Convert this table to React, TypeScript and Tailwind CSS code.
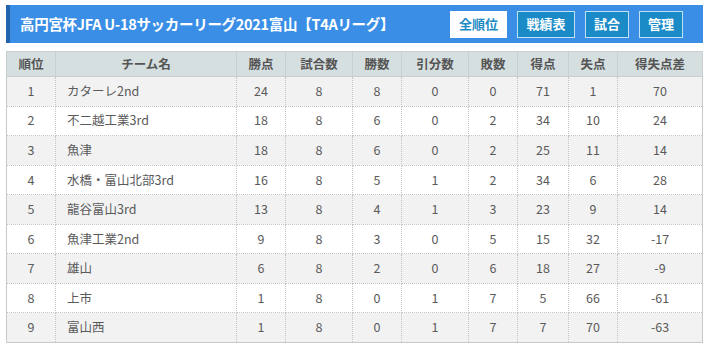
import React from "react";

type Row = {
  rank: number;
  team: string;
  pts: number;
  played: number;
  win: number;
  draw: number;
  lose: number;
  gf: number;
  ga: number;
  gd: number;
};

const rows: Row[] = [
  { rank: 1, team: "カターレ2nd", pts: 24, played: 8, win: 8, draw: 0, lose: 0, gf: 71, ga: 1, gd: 70 },
  { rank: 2, team: "不二越工業3rd", pts: 18, played: 8, win: 6, draw: 0, lose: 2, gf: 34, ga: 10, gd: 24 },
  { rank: 3, team: "魚津", pts: 18, played: 8, win: 6, draw: 0, lose: 2, gf: 25, ga: 11, gd: 14 },
  { rank: 4, team: "水橋・富山北部3rd", pts: 16, played: 8, win: 5, draw: 1, lose: 2, gf: 34, ga: 6, gd: 28 },
  { rank: 5, team: "龍谷富山3rd", pts: 13, played: 8, win: 4, draw: 1, lose: 3, gf: 23, ga: 9, gd: 14 },
  { rank: 6, team: "魚津工業2nd", pts: 9, played: 8, win: 3, draw: 0, lose: 5, gf: 15, ga: 32, gd: -17 },
  { rank: 7, team: "雄山", pts: 6, played: 8, win: 2, draw: 0, lose: 6, gf: 18, ga: 27, gd: -9 },
  { rank: 8, team: "上市", pts: 1, played: 8, win: 0, draw: 1, lose: 7, gf: 5, ga: 66, gd: -61 },
  { rank: 9, team: "富山西", pts: 1, played: 8, win: 0, draw: 1, lose: 7, gf: 7, ga: 70, gd: -63 },
];

const headers = ["順位", "チーム名", "勝点", "試合数", "勝数", "引分数", "敗数", "得点", "失点", "得失点差"];
const widths = ["w-[49px]", "w-[181px]", "w-[49px]", "w-[67px]", "w-[49px]", "w-[67px]", "w-[49px]", "w-[51px]", "w-[49px]", "w-[85px]"];

// 順位表の1行分
function StandingRow({ row, odd }: { row: Row; odd: boolean }) {
  const cell = "border border-dotted border-[#c4c4c4] text-center";
  const values = [row.pts, row.played, row.win, row.draw, row.lose, row.gf, row.ga, row.gd];
  return (
    <tr className={`h-[29.55px] ${odd ? "bg-[#f2f2f2]" : "bg-white"}`}>
      <td className={cell}>{row.rank}</td>
      <td className="border border-dotted border-[#c4c4c4] pl-[11px] text-left">{row.team}</td>
      {values.map((v, i) => (
        <td key={i} className={cell}>
          {v}
        </td>
      ))}
    </tr>
  );
}

export default function App() {
  const tabs = ["戦績表", "試合", "管理"];

  return (
    <div className="w-[708px] h-[350px] bg-white pt-[5px] font-['Meiryo','Noto_Sans_CJK_JP',sans-serif]">
      <div className="ml-[6px] w-[697px] h-[38px] flex items-center justify-between bg-[#3a8ee6] border-l-[4px] border-[#2263ad] pl-[10px] pr-[20px]">
        <h1 className="text-white text-[14.5px] font-bold tracking-[-0.3px]">
          高円宮杯JFA U-18サッカーリーグ2021富山【T4Aリーグ】
        </h1>
        <div className="flex items-center gap-[10px]">
          <button className="h-[27px] w-[57px] bg-white text-[#1a8ac6] text-[13px] font-bold">全順位</button>
          {tabs.map((t) => (
            <button
              key={t}
              className={`h-[27px] ${t === "戦績表" ? "w-[58px]" : "w-[44px]"} bg-[#1b8bc7] border border-[#bfe0f5] text-white text-[13px] font-bold`}
            >
              {t}
            </button>
          ))}
        </div>
      </div>

      <table className="ml-[6px] mt-[8px] w-[696px] table-fixed border-collapse border border-[#c8c8c8] text-[12.5px] text-[#5a5a5a]">
        <thead>
          <tr className="h-[25px] bg-[#d5dfe0]">
            {headers.map((h, i) => (
              <th key={h} className={`${widths[i]} border border-[#c8cfd0] font-bold text-[#555] text-[12.5px]`}>
                {h}
              </th>
            ))}
          </tr>
        </thead>
        <tbody>
          {rows.map((r, i) => (
            <StandingRow key={r.rank} row={r} odd={i % 2 === 0} />
          ))}
        </tbody>
      </table>
    </div>
  );
}
